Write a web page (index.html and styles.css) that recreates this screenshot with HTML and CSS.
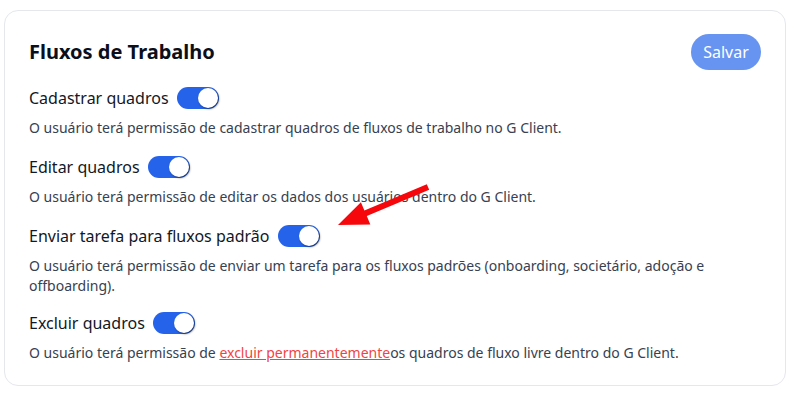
FILE: index.html
```html
<!DOCTYPE html>
<html lang="pt-BR">
<head>
<meta charset="utf-8">
<link rel="stylesheet" href="styles.css">
</head>
<body>
<section class="card">
  <header class="card-header">
    <h2 class="title">Fluxos de Trabalho</h2>
    <button class="save-btn">Salvar</button>
  </header>
  <div class="perm">
    <div class="perm-head"><span class="perm-label">Cadastrar quadros</span><span class="toggle"><span class="knob"></span></span></div>
    <p class="perm-desc">O usuário terá permissão de cadastrar quadros de fluxos de trabalho no G Client.</p>
  </div>
  <div class="perm">
    <div class="perm-head"><span class="perm-label">Editar quadros</span><span class="toggle"><span class="knob"></span></span></div>
    <p class="perm-desc">O usuário terá permissão de editar os dados dos usuários dentro do G Client.</p>
  </div>
  <div class="perm">
    <div class="perm-head"><span class="perm-label">Enviar tarefa para fluxos padrão</span><span class="toggle"><span class="knob"></span></span></div>
    <p class="perm-desc perm-desc-wrap">O usuário terá permissão de enviar um tarefa para os fluxos padrões (onboarding, societário, adoção e offboarding).</p>
  </div>
  <div class="perm">
    <div class="perm-head"><span class="perm-label">Excluir quadros</span><span class="toggle"><span class="knob"></span></span></div>
    <p class="perm-desc">O usuário terá permissão de <a class="danger-link" href="#">excluir permanentemente</a>os quadros de fluxo livre dentro do G Client.</p>
  </div>
  <svg class="arrow" width="104" height="52" viewBox="0 0 104 52">
    <polygon fill="#f5070b" points="7,46 39.3,45.4 35.8,37.1 98.2,10.8 95.8,5.2 33.4,31.5 29.9,23.2"/>
  </svg>
</section>
</body>
</html>
```

FILE: styles.css
```css
* { box-sizing: border-box; }
html, body { margin: 0; background: #ffffff; }
body {
  padding: 10px 10px 9px 4px;
  font-family: "Noto Sans", "Open Sans", sans-serif;
  color: #111827;
}
.card {
  position: relative;
  border: 1px solid #e5e7eb;
  border-radius: 14px;
  padding: 23px 24px 22px 24px;
  display: flex;
  flex-direction: column;
  gap: 17px;
}
.card-header {
  display: flex;
  align-items: center;
  justify-content: space-between;
  height: 36px;
  margin-bottom: -1px;
}
.title {
  margin: 0;
  font-size: 20px;
  font-weight: 700;
  line-height: 24px;
  color: #0b0f19;
}
.save-btn {
  width: 70px;
  height: 36px;
  border: none;
  border-radius: 18px;
  background: #6694f0;
  color: #ffffff;
  font-family: inherit;
  font-size: 16px;
  padding: 0;
}
.perm { display: flex; flex-direction: column; gap: 8px; }
.perm-head {
  display: flex;
  align-items: center;
  gap: 8px;
  height: 24px;
}
.perm-label { font-size: 16px; line-height: 24px; color: #111827; }
.toggle {
  position: relative;
  width: 42px;
  height: 22px;
  border-radius: 11px;
  background: #2563eb;
  flex: none;
}
.knob {
  position: absolute;
  right: 1px;
  top: 1px;
  width: 20px;
  height: 20px;
  border-radius: 50%;
  background: #ffffff;
  box-shadow: 1px 1px 2px rgba(0,0,0,0.55);
}
.perm-desc {
  margin: 0;
  font-size: 14px;
  line-height: 20px;
  color: #374151;
}
.perm-desc-wrap { margin-bottom: -2px; }
.danger-link { color: #ef4444; text-decoration: underline; }
.arrow { position: absolute; left: 326px; top: 168px; }
```
